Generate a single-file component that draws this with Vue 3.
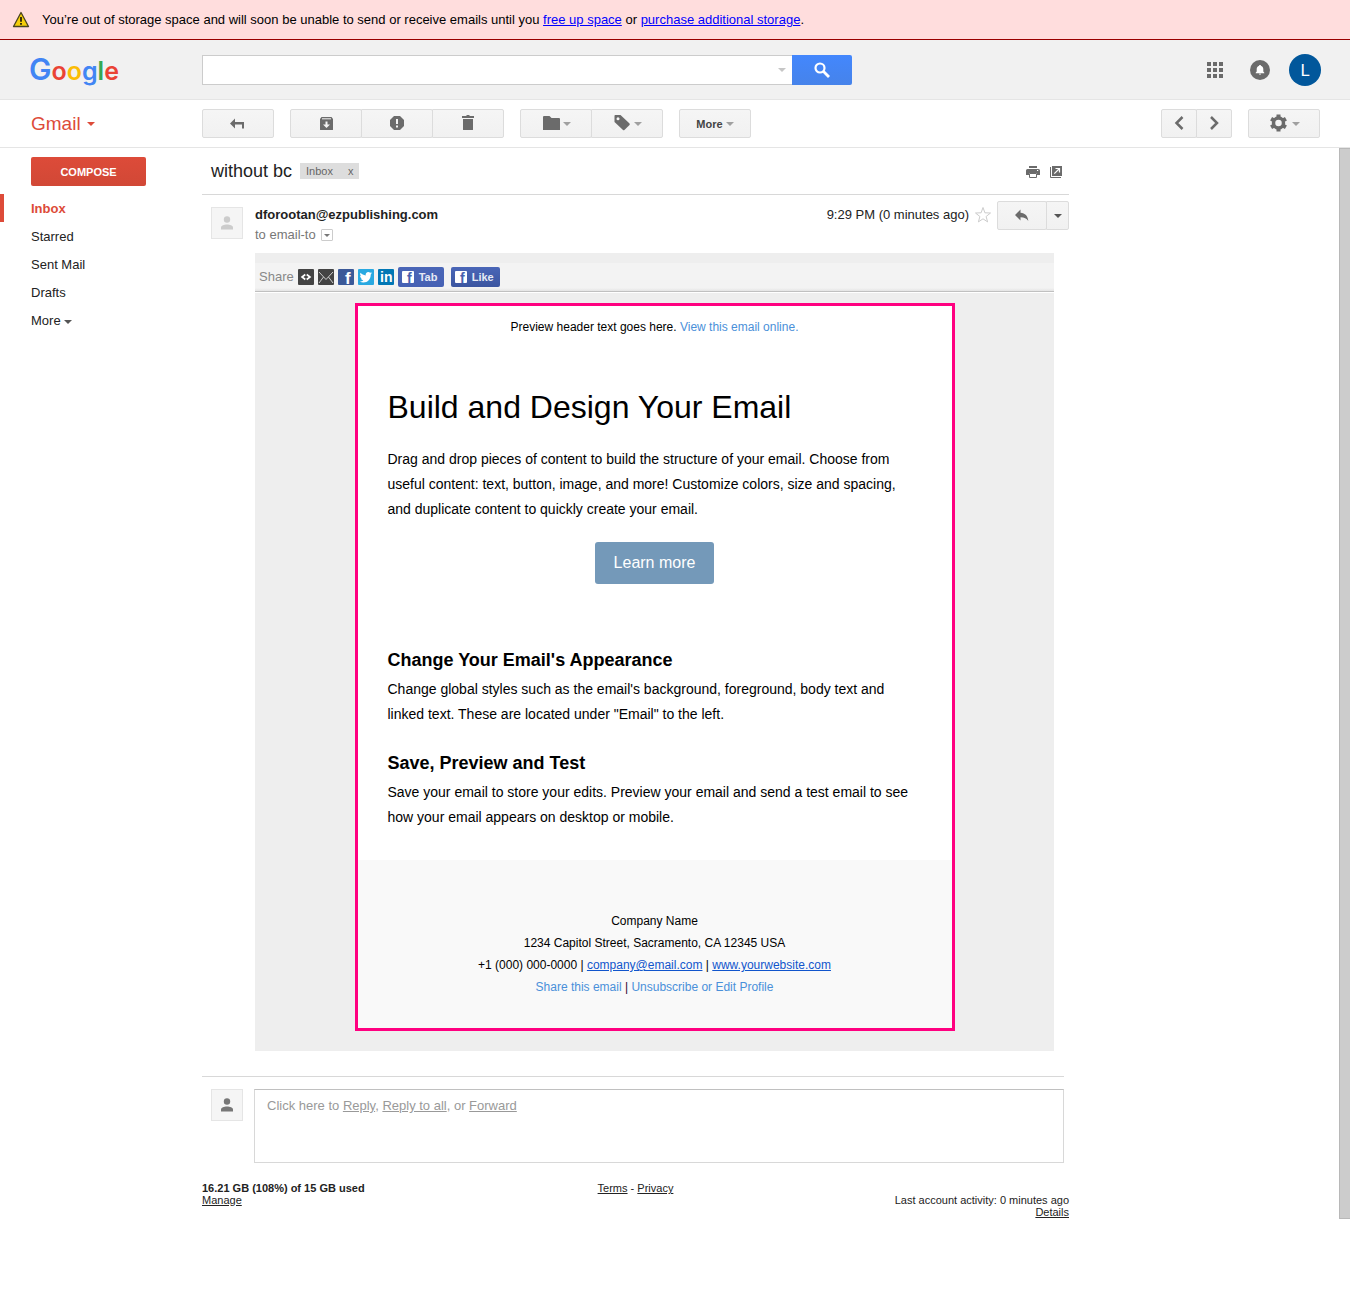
<script setup>
const folders = ['Starred', 'Sent Mail', 'Drafts']
</script>

<template>
  <div class="page">
    <div class="alert">
      <svg width="18" height="18" viewBox="0 0 18 18" aria-hidden="true">
        <path d="M9 1.500 L16.500 15.500 H1.500 Z" fill="#f5cf0a" stroke="#4a4520" stroke-width="1.300" stroke-linejoin="round" />
        <path d="M9 6 V10.800 M9 12 V13.800" stroke="#3a3208" stroke-width="2" />
      </svg>
      <p>You’re out of storage space and will soon be unable to send or receive emails until you <a href="#">free up space</a> or <a href="#">purchase additional storage</a>.</p>
    </div>

    <header class="topbar">
      <a href="#" class="logo" aria-label="Google"><span class="b cap">G</span><span class="r">o</span><span class="y">o</span><span class="b">g</span><span class="g">l</span><span class="r">e</span></a>
      <form class="search" @submit.prevent>
        <div class="field">
          <input type="text" aria-label="Search mail">
          <button type="button" class="options" aria-label="Show search options"><i class="caret light"></i></button>
        </div>
        <button type="submit" class="go" aria-label="Search">
          <svg width="18" height="18" viewBox="0 0 18 18"><circle cx="7" cy="7" r="4.500" fill="none" stroke="#fff" stroke-width="2.200" /><path d="M10.300 10.300 L16 16" stroke="#fff" stroke-width="2.800" /></svg>
        </button>
      </form>
      <div class="account">
        <button type="button" class="bare" aria-label="Apps">
          <svg width="16" height="16" viewBox="0 0 16 16" fill="#6b6b6b"><path d="M0 0h4v4H0zM6 0h4v4H6zM12 0h4v4h-4zM0 6h4v4H0zM6 6h4v4H6zM12 6h4v4h-4zM0 12h4v4H0zM6 12h4v4H6zM12 12h4v4h-4z" /></svg>
        </button>
        <button type="button" class="bare" aria-label="Notifications">
          <svg width="20" height="20" viewBox="0 0 20 20"><circle cx="10" cy="10" r="10" fill="#6b6b6b" /><path d="M9.200 5h1.600v.8c1.600.4 2.500 1.700 2.500 3.200v2.600l1 1.100v.6H5.700v-.6l1-1.100V9c0-1.500.9-2.800 2.500-3.200z M9 13.700h2v.9H9z" fill="#fff" /></svg>
        </button>
        <button type="button" class="avatar">L</button>
      </div>
    </header>

    <div class="toolbar">
      <button type="button" class="gmail">Gmail <i class="caret red"></i></button>
      <div class="actions">
        <button type="button" class="btn" aria-label="Back to Inbox">
          <svg width="16" height="16" viewBox="0 0 16 16" fill="#6b6b6b"><path d="M0 7.500l5-5V6h9v6.500h-2V8.500H5v4z" /></svg>
        </button>
        <div class="group">
          <button type="button" class="btn" aria-label="Archive">
            <svg width="16" height="16" viewBox="0 0 16 16"><path d="M3.500 1h10l1.500 2v10.500q0 .5-.5.5h-12q-.5 0-.5-.5V3z" fill="#6b6b6b" /><path d="M4 2.800h9" stroke="#f3f3f3" /><path d="M7.500 5.500h2v3H12L8.500 12 5 8.500h2.500z" fill="#f3f3f3" /></svg>
          </button>
          <button type="button" class="btn" aria-label="Report spam">
            <svg width="16" height="16" viewBox="0 0 16 16"><path d="M5 0h6l4 4v6l-4 4H5l-4-4V4z" fill="#6b6b6b" /><path d="M8 3v5M8 9.500v2" stroke="#f3f3f3" stroke-width="2" /></svg>
          </button>
          <button type="button" class="btn" aria-label="Delete">
            <svg width="16" height="16" viewBox="0 0 16 16" fill="#6b6b6b"><path d="M2 0h4l1-1h2l1 1h4v2H2zM3 3h10v10.500q0 .5-.5.5h-9q-.5 0-.5-.5z" /></svg>
          </button>
        </div>
        <div class="group">
          <button type="button" class="btn" aria-label="Move to">
            <svg width="16" height="16" viewBox="0 0 16 16" fill="#6b6b6b"><path d="M2 0h5.500l2 2H17q1 0 1 1v11H1V1q0-1 1-1z" /></svg><i class="caret mid"></i>
          </button>
          <button type="button" class="btn" aria-label="Labels">
            <svg width="16" height="16" viewBox="0 0 16 16"><path d="M2-1h5.500L16.500 7.500q.6.7 0 1.400L11.400 14q-.7.6-1.400 0L1.500 6V-.2z" fill="#6b6b6b" /><circle cx="5" cy="2.800" r="1.500" fill="#f5f5f5" /></svg><i class="caret mid"></i>
          </button>
        </div>
        <button type="button" class="btn more">More <i class="caret mid"></i></button>
      </div>
      <div class="paging">
        <div class="group">
          <button type="button" class="btn narrow" aria-label="Newer"><svg width="16" height="16" viewBox="0 0 16 16"><path d="M11.500 1L5.500 7l6 6" fill="none" stroke="#6b6b6b" stroke-width="2.500" /></svg></button>
          <button type="button" class="btn narrow" aria-label="Older"><svg width="16" height="16" viewBox="0 0 16 16"><path d="M5 1l6 6-6 6" fill="none" stroke="#6b6b6b" stroke-width="2.500" /></svg></button>
        </div>
        <button type="button" class="btn" aria-label="Settings">
          <svg width="18" height="18" viewBox="0 0 18 18"><circle cx="9.500" cy="8" r="5" fill="none" stroke="#6b6b6b" stroke-width="3.500" /><path d="M9.500-.5v3M9.500 13.500v3M2.100 3.700l2.600 1.500M14.300 10.800l2.600 1.500M2.100 12.300l2.600-1.500M14.300 5.200l2.600-1.500" stroke="#6b6b6b" stroke-width="4" /></svg><i class="caret mid"></i>
        </button>
      </div>
    </div>

    <div class="body">
      <nav class="sidebar">
        <button type="button" class="compose">COMPOSE</button>
        <a href="#" class="current">Inbox</a>
        <a v-for="name in folders" :key="name" href="#">{{ name }}</a>
        <a href="#">More <i class="caret dark"></i></a>
      </nav>

      <main>
        <div class="subject">
          <h1>without bc</h1>
          <div class="label"><span>Inbox</span><button type="button" aria-label="Remove label">x</button></div>
          <div class="tools">
            <button type="button" class="bare" aria-label="Print all">
              <svg width="14" height="12" viewBox="0 0 14 12"><path d="M3 0h8v2H3zM1.500 3h11Q14 3 14 4.500V9h-3V7H3v2H0V4.500Q0 3 1.500 3z" fill="#6b6b6b" /><path d="M3.500 7.500h7v4h-7z" fill="#fff" stroke="#6b6b6b" /><path d="M11 4.500h1.200" stroke="#fff" /></svg>
            </button>
            <button type="button" class="bare" aria-label="In new window">
              <svg width="12" height="12" viewBox="0 0 12 12"><path d="M2 0h10v10H2z" fill="#6b6b6b" /><path d="M.5 1v10.500H11" fill="none" stroke="#6b6b6b" /><path d="M4.300 7.700L9 3M5.500 2.500h4v4" fill="none" stroke="#fff" stroke-width="1.200" /></svg>
            </button>
          </div>
        </div>

        <article class="message">
          <div class="photo faint"><svg width="12" height="14" viewBox="0 0 12 14" fill="currentColor"><circle cx="6" cy="3.500" r="3.200" /><path d="M0 13.500v-2C0 9.500 3 8.500 6 8.500s6 1 6 3v2z" /></svg></div>
          <div class="content">
            <div class="meta">
              <div class="who">
                <strong>dforootan@ezpublishing.com</strong>
                <div class="to">to email-to <button type="button" aria-label="Show details"><i class="caret tiny"></i></button></div>
              </div>
              <time>9:29 PM (0 minutes ago)</time>
              <button type="button" class="bare star" aria-label="Star"><svg width="16" height="16" viewBox="0 0 16 16"><path d="M8 .5l1.900 5.300 5.600.2-4.400 3.500 1.500 5.400L8 11.800l-4.600 3.100 1.500-5.400L.5 6l5.600-.2z" fill="#fff" stroke="#ccc" /></svg></button>
              <div class="group">
                <button type="button" class="btn reply" aria-label="Reply"><svg width="14" height="12" viewBox="0 0 14 12" fill="#6b6b6b"><path d="M0 5L5.500-.5v3.200C10 2.900 13 6 13.300 11 11.500 8.300 9.500 7.200 5.500 7.200v3.300z" /></svg></button>
                <button type="button" class="btn menu" aria-label="More options"><i class="caret dark"></i></button>
              </div>
            </div>

            <div class="mail">
              <div class="share">
                <span>Share</span>
                <a href="#" aria-label="Embed"><svg width="16" height="16" viewBox="0 0 16 16"><rect width="16" height="16" rx="1" fill="#444" /><path d="M7.300 5.500L4 8l3.300 2.500M8.700 5.500L12 8l-3.300 2.500" fill="none" stroke="#fff" stroke-width="1.600" /></svg></a>
                <a href="#" aria-label="Email"><svg width="16" height="16" viewBox="0 0 16 16"><rect width="16" height="16" rx="1" fill="#444" /><path d="M1 3l7 7.500L15 3M1 14l4.500-6M15 14l-4.500-6" fill="none" stroke="#ccc" /></svg></a>
                <a href="#" aria-label="Facebook"><svg width="16" height="16" viewBox="0 0 16 16"><rect width="16" height="16" rx="1" fill="#3b5998" /><text x="7" y="15" class="glyph" font-size="17">f</text></svg></a>
                <a href="#" aria-label="Twitter"><svg width="16" height="16" viewBox="0 0 16 16"><rect width="16" height="16" rx="1" fill="#29a9e1" /><path d="M14 4.200l-1.300 1.300c.1 4.500-3 8-7.200 8-1.400 0-2.600-.4-3.700-1.100 1.300.1 2.500-.2 3.500-1-1.100-.1-2-.8-2.300-1.800h1.100C2.900 9.200 2 8.200 2 7l1.200.3C2.100 6.400 1.800 5 2.500 3.800 3.800 5.300 5.600 6.300 7.700 6.400 7.300 4.400 8.700 3 10.300 3c.7 0 1.400.3 1.900.8l1.600-.6-1 1.300z" fill="#fff" /></svg></a>
                <a href="#" aria-label="LinkedIn"><svg width="16" height="16" viewBox="0 0 16 16"><rect width="16" height="16" rx="1" fill="#0177b5" /><text x="2" y="13" class="glyph" font-size="14">in</text></svg></a>
                <a href="#" class="fb"><svg width="12" height="12" viewBox="0 0 12 12"><rect width="12" height="12" rx="1" fill="#fff" /><text x="5" y="12" class="glyph blue" font-size="14">f</text></svg>Tab</a>
                <a href="#" class="fb like"><svg width="12" height="12" viewBox="0 0 12 12"><rect width="12" height="12" rx="1" fill="#fff" /><text x="5" y="12" class="glyph blue" font-size="14">f</text></svg>Like</a>
              </div>

              <div class="sheet">
                <p class="preview">Preview header text goes here. <a href="#">View this email online.</a></p>
                <section class="copy">
                  <h2>Build and Design Your Email</h2>
                  <p>Drag and drop pieces of content to build the structure of your email. Choose from useful content: text, button, image, and more! Customize colors, size and spacing, and duplicate content to quickly create your email.</p>
                  <a href="#" class="learn">Learn more</a>
                  <h3>Change Your Email's Appearance</h3>
                  <p>Change global styles such as the email's background, foreground, body text and linked text. These are located under "Email" to the left.</p>
                  <h3>Save, Preview and Test</h3>
                  <p>Save your email to store your edits. Preview your email and send a test email to see how your email appears on desktop or mobile.</p>
                </section>
                <footer class="company">
                  <div>Company Name</div>
                  <div>1234 Capitol Street, Sacramento, CA 12345 USA</div>
                  <div>+1 (000) 000-0000 | <a href="#" class="under">company@email.com</a> | <a href="#" class="under">www.yourwebsite.com</a></div>
                  <div class="links"><a href="#">Share this email</a> | <a href="#">Unsubscribe or Edit Profile</a></div>
                </footer>
              </div>
            </div>
          </div>
        </article>

        <div class="respond">
          <div class="photo"><svg width="12" height="14" viewBox="0 0 12 14" fill="currentColor"><circle cx="6" cy="3.500" r="3.200" /><path d="M0 13.500v-2C0 9.500 3 8.500 6 8.500s6 1 6 3v2z" /></svg></div>
          <div class="box">Click here to <a href="#">Reply</a>, <a href="#">Reply to all</a>, or <a href="#">Forward</a></div>
        </div>

        <footer class="foot">
          <div><strong>16.21 GB (108%) of 15 GB used</strong><br><a href="#">Manage</a></div>
          <div class="center"><a href="#">Terms</a> - <a href="#">Privacy</a></div>
          <div class="right">Last account activity: 0 minutes ago<br><a href="#">Details</a></div>
        </footer>
      </main>
      <div class="scroll" aria-hidden="true"></div>
    </div>
  </div>
</template>

<style>
body {
  background: #fff;
}
</style>

<style scoped>
.page,
.page * {
  box-sizing: border-box;
}
.page {
  font: 13px/20px "Liberation Sans", Arial, sans-serif;
  color: #222;
}
h1, h2, h3, p {
  margin: 0;
  font-weight: 400;
}
button, input {
  font: inherit;
  margin: 0;
  padding: 0;
  border: 0;
  background: none;
  color: inherit;
}
svg {
  display: block;
  flex: none;
  overflow: visible;
}
.caret {
  display: inline-block;
  flex: none;
  border: 4px solid transparent;
  border-bottom: 0;
  border-top-color: currentColor;
  vertical-align: middle;
}
.light { color: #c6c6c6; }
.mid { color: #a0a0a0; }
.dark { color: #555; }
.red { color: #dd4b39; }
.tiny { color: #777; border-width: 3px 3px 0; }

.alert {
  display: flex;
  align-items: center;
  gap: 12px;
  min-height: 40px;
  padding: 0 12px;
  background: #fdd;
  border-bottom: 1px solid #900;
  color: #000;
}
.alert a { color: #00f; }

.topbar {
  display: flex;
  align-items: center;
  height: 60px;
  padding-right: 29px;
  background: #f1f1f1;
  border-bottom: 1px solid #e5e5e5;
}
.logo {
  flex: none;
  width: 202px;
  padding-left: 29px;
  font: 600 25px/36px Inter, sans-serif;
  text-decoration: none;
}
.logo .cap { font-size: 30px; }
.logo .b { color: #4285f4; }
.logo .r { color: #ea4335; }
.logo .y { color: #fbbc05; }
.logo .g { color: #34a853; }
.search {
  display: flex;
  flex: 0 1 650px;
  height: 30px;
}
.field {
  display: flex;
  flex: 1;
  background: #fff;
  border: 1px solid #ccc;
  border-right: 0;
}
.field input {
  flex: 1;
  min-width: 0;
  padding: 0 8px;
  outline: none;
}
.options {
  display: flex;
  align-items: center;
  justify-content: center;
  width: 20px;
}
.go {
  display: flex;
  align-items: center;
  justify-content: center;
  width: 60px;
  border-radius: 0 2px 2px 0;
  background: linear-gradient(#4387fd, #4683ea);
}
.account {
  display: flex;
  align-items: center;
  margin-left: auto;
}
.account .bare:first-child { margin-right: 27px; }
.avatar {
  width: 32px;
  height: 32px;
  margin-left: 19px;
  border-radius: 50%;
  background: #01579b;
  color: #fff;
  font: 17px/32px Roboto, sans-serif;
}

.toolbar {
  display: flex;
  align-items: center;
  height: 48px;
  padding-right: 30px;
  border-bottom: 1px solid #e5e5e5;
}
.gmail {
  display: flex;
  align-items: center;
  gap: 6px;
  flex: none;
  width: 202px;
  padding-left: 31px;
  color: #dd4b39;
  font-size: 19px;
}
.actions,
.paging {
  display: flex;
  gap: 16px;
}
.paging { margin-left: auto; }
.group { display: flex; }
.btn {
  display: flex;
  align-items: center;
  justify-content: center;
  gap: 5px;
  width: 72px;
  height: 29px;
  border: 1px solid #dcdcdc;
  border-radius: 2px;
  background: linear-gradient(#f5f5f5, #f1f1f1);
}
.group .btn + .btn {
  margin-left: -1px;
  border-top-left-radius: 0;
  border-bottom-left-radius: 0;
}
.btn.narrow { width: 36px; }
.btn.more {
  gap: 3px;
  color: #444;
  font-size: 11px;
  font-weight: 700;
}
.btn.reply { width: 50px; }
.btn.menu { width: 23px; }

.body {
  display: flex;
}
.sidebar {
  flex: none;
  width: 202px;
  padding-top: 9px;
}
.compose {
  display: block;
  width: 115px;
  height: 29px;
  margin: 0 0 8px 31px;
  border-radius: 2px;
  background: linear-gradient(#dd4b39, #d14836);
  color: #fff;
  font-size: 11px;
  font-weight: 700;
}
.sidebar a {
  display: block;
  padding: 2px 0 0 31px;
  line-height: 26px;
  color: #222;
  text-decoration: none;
}
.sidebar .current {
  padding-left: 27px;
  border-left: 4px solid #dd4b39;
  color: #dd4b39;
  font-weight: 700;
}

main {
  flex: 0 1 867px;
  min-width: 0;
}
.subject {
  display: flex;
  align-items: center;
  height: 47px;
  padding: 0 7px 0 9px;
  border-bottom: 1px solid #d8d8d8;
}
.subject h1 {
  font-size: 18px;
  line-height: 24px;
}
.label {
  display: flex;
  gap: 15px;
  margin-left: 8px;
  padding: 0 6px;
  background: #ddd;
  color: #666;
  font-size: 11px;
  line-height: 16px;
}
.tools {
  display: flex;
  align-items: center;
  gap: 10px;
  margin-left: auto;
  padding-top: 2px;
}
.message {
  display: flex;
  gap: 12px;
  padding: 6px 0 25px 9px;
}
.photo {
  display: flex;
  align-items: center;
  justify-content: center;
  flex: none;
  width: 32px;
  height: 32px;
  border: 1px solid #e5e5e5;
  background: #f5f5f5;
  color: #777;
}
.message .photo { margin-top: 6px; }
.photo.faint { color: #ccc; }
.content {
  flex: 1;
  min-width: 0;
}
.meta {
  display: flex;
  align-items: flex-start;
  height: 52px;
}
.who {
  flex: 1;
  padding-top: 4px;
}
.to {
  display: flex;
  align-items: center;
  gap: 5px;
  color: #777;
}
.to button {
  display: flex;
  align-items: center;
  justify-content: center;
  width: 12px;
  height: 12px;
  border: 1px solid #ccc;
  border-radius: 1px;
}
time { padding-top: 4px; }
.star { margin: 6px 6px 0; }

.mail {
  margin-right: 15px;
  padding: 10px 0 20px;
  background: #eee;
}
.share {
  display: flex;
  align-items: center;
  gap: 4px;
  height: 29px;
  padding-left: 4px;
  border-bottom: 1px solid #c0c0c0;
  box-shadow: 0 1px #fff;
  background: linear-gradient(#f3f3f3 25px, #e4e4e4);
  color: #888;
}
.glyph {
  fill: #fff;
  font-family: "Liberation Sans", Arial, sans-serif;
  font-weight: 700;
}
.glyph.blue { fill: #4661b0; }
.fb {
  display: flex;
  align-items: center;
  gap: 5px;
  width: 46px;
  height: 20px;
  padding-left: 4px;
  border-radius: 2px;
  background: linear-gradient(#4a66b7, #4661b4);
  color: #e6eaf5;
  font-size: 11px;
  font-weight: 700;
  text-decoration: none;
}
.like {
  width: 49px;
  margin-left: 3px;
  background: linear-gradient(#4a66b7, #3b55a0);
}
.sheet {
  max-width: 600px;
  margin: 11px auto 0;
  border: 3px solid #ff0080;
  background: #fff;
  color: #000;
}
.preview {
  padding-top: 11px;
  font-size: 12px;
  text-align: center;
}
.sheet a {
  color: #4a90d9;
  text-decoration: none;
}
.copy {
  padding: 47px 30px 30px;
  font-size: 14px;
  line-height: 25px;
}
.copy h2 {
  margin-bottom: 17px;
  font-size: 32px;
  line-height: 46px;
}
.copy h3 {
  margin: 20px 0 1px;
  font-size: 18px;
  font-weight: 700;
  line-height: 32px;
}
.sheet .learn {
  display: block;
  width: 119px;
  margin: 20px auto 60px;
  border-radius: 3px;
  background: #7499b9;
  color: #fff;
  font-size: 16px;
  line-height: 42px;
  text-align: center;
}
.company {
  padding: 50px 0 30px;
  background: #f9f9f9;
  font-size: 12px;
  line-height: 22px;
  text-align: center;
}
.company .under {
  color: #15c;
  text-decoration: underline;
}
.links { color: #303; }

.respond {
  display: flex;
  gap: 11px;
  margin-right: 5px;
  padding: 12px 0 0 9px;
  border-top: 1px solid #d8d8d8;
}
.box {
  flex: 1;
  height: 74px;
  padding: 6px 12px;
  border: 1px solid #d8d8d8;
  border-top-color: #c0c0c0;
  color: #999;
}
.box a { color: #999; }
.foot {
  display: grid;
  grid-template-columns: 1fr 1fr 1fr;
  padding: 19px 0 1px;
  font-size: 11px;
  line-height: 12px;
}
.foot a { color: #222; }
.center { text-align: center; }
.right {
  padding-top: 12px;
  text-align: right;
}
.scroll {
  width: 11px;
  margin-left: auto;
  border: 1px solid #b8b8b8;
  border-right: 0;
  background: #ccc;
}
</style>
